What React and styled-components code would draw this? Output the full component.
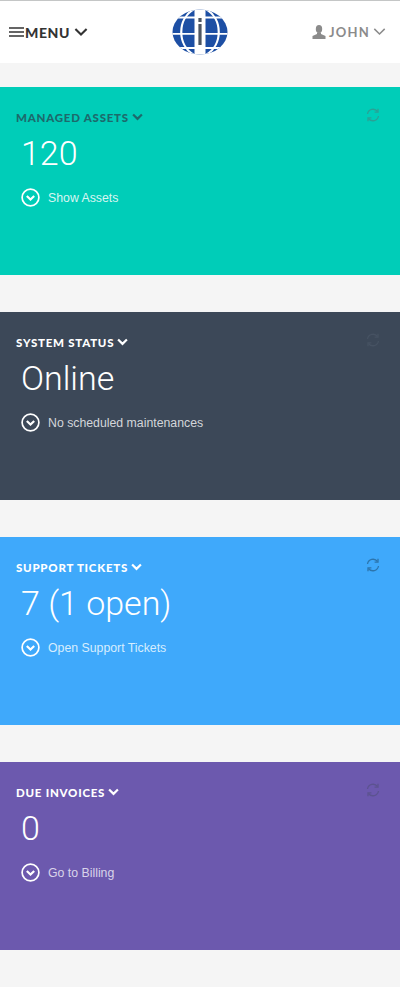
import styled, { createGlobalStyle } from "styled-components";

const GlobalStyle = createGlobalStyle`
  html, body {
    margin: 0;
    padding: 0;
    background: #f5f5f5;
  }
`;

const Page = styled.div`
  width: 400px;
  height: 987px;
  overflow: hidden;
  background: #f5f5f5;
`;

const Header = styled.header`
  height: 63px;
  box-sizing: border-box;
  border-top: 1px solid #c4c6c6;
  background: #fff;
  display: grid;
  grid-template-columns: 1fr auto 1fr;
  align-items: center;
  padding: 0 9px;
`;

const MenuButton = styled.div`
  display: flex;
  align-items: center;
  gap: 1px;
  font-family: "Lato", sans-serif;
  font-weight: 900;
  font-size: 14px;
  letter-spacing: 0.6px;
  color: #333;
`;

const UserButton = styled.div`
  display: flex;
  align-items: center;
  justify-content: flex-end;
  gap: 3px;
  padding-right: 5px;
  font-family: "Lato", sans-serif;
  font-weight: 700;
  font-size: 13px;
  letter-spacing: 1.2px;
  color: #8b8b8b;
`;

const Cards = styled.main`
  display: flex;
  flex-direction: column;
  gap: 37px;
  padding-top: 24px;
`;

const Card = styled.section`
  height: 188px;
  box-sizing: border-box;
  background: ${(p) => p.$bg};
  padding: 22px 16px 0;
  position: relative;
`;

const CardTitle = styled.div`
  display: flex;
  align-items: center;
  gap: 3px;
  height: 16px;
  font-family: "Lato", sans-serif;
  font-weight: 900;
  font-size: 11.5px;
  letter-spacing: 0.75px;
  color: ${(p) => p.$color};
`;

const Refresh = styled.svg`
  position: absolute;
  top: 21px;
  right: 20px;
  width: 14px;
  height: 14px;
  fill: none;
  stroke: ${(p) => p.$color};
  stroke-width: 1.3;
`;

const CardValue = styled.div`
  margin: 7px 0 0 5px;
  height: 42px;
  line-height: 42px;
  font-family: "Roboto", sans-serif;
  font-weight: 300;
  font-size: 34px;
  color: #fff;
`;

const CardLink = styled.div`
  display: flex;
  align-items: center;
  gap: 8px;
  margin: 14px 0 0 5px;
  font-family: "Liberation Sans", sans-serif;
  font-size: 12.3px;
  color: ${(p) => p.$color};
`;

const LinkIcon = styled.svg`
  width: 19px;
  height: 19px;
  flex: none;
`;

const Spacer = styled.span`
  width: 2px;
`;

const Chevron = ({ size = 12, width = 2, color = "currentColor" }) => (
  <svg width={size} height={size * 0.7} viewBox="0 0 12 8" fill="none">
    <path d="M1.2 1.5 6 6.2l4.8-4.7" stroke={color} strokeWidth={width} />
  </svg>
);

const Burger = () => (
  <svg width="15" height="10" viewBox="0 0 15 10">
    <path d="M0 1h15M0 5h15M0 9h15" stroke="#333" strokeWidth="1.6" />
  </svg>
);

const UserIcon = () => (
  <svg width="14" height="14" viewBox="0 0 14 14" fill="#8b8b8b">
    <ellipse cx="7" cy="4" rx="3.2" ry="4" />
    <path d="M5 7.5h4v1.6l4.5 2V14H.5v-2.9L5 9.1z" />
  </svg>
);

const Logo = () => (
  <svg width="56" height="46" viewBox="0 0 56 46">
    <defs>
      <clipPath id="globe">
        <ellipse cx="28" cy="23" rx="27.5" ry="22.5" />
      </clipPath>
    </defs>
    <g clipPath="url(#globe)">
      <rect width="56" height="46" fill="#1d4fa4" />
      <path d="M0 8.5h56M0 24.8h56M0 39h56" stroke="#fff" strokeWidth="1.8" />
      <rect x="22.5" y="0" width="11" height="46" fill="#fff" />
      <path d="M22 0C5 10 5 36 22 46M34 0c17 10 17 36 0 46" fill="none" stroke="#fff" strokeWidth="2.2" />
    </g>
    <rect x="26.4" y="9" width="3.2" height="4" fill="#4d5560" />
    <rect x="26.4" y="15" width="3.2" height="21" fill="#4d5560" />
  </svg>
);

const LinkCircle = ({ color }) => (
  <LinkIcon viewBox="0 0 19 19" fill="none">
    <circle cx="9.5" cy="9.5" r="8.4" stroke={color} strokeWidth="1.7" />
    <path d="M5.8 8 9.5 11.5 13.2 8" stroke={color} strokeWidth="2.2" />
  </LinkIcon>
);

const cards = [
  { title: "MANAGED ASSETS", value: "120", link: "Show Assets", bg: "#00cdb8", titleColor: "#1d6a6c", refresh: "#2aa195", linkColor: "#d8f6f2" },
  { title: "SYSTEM STATUS", value: "Online", link: "No scheduled maintenances", bg: "#3c4858", titleColor: "#fff", refresh: "#465262", linkColor: "#d3d6da" },
  { title: "SUPPORT TICKETS", value: "7 (1 open)", link: "Open Support Tickets", bg: "#3fa9fb", titleColor: "#fff", refresh: "#2c75ad", linkColor: "#d6edfe" },
  { title: "DUE INVOICES", value: "0", link: "Go to Billing", bg: "#6c59ae", titleColor: "#fff", refresh: "#5c5390", linkColor: "#d9d4ea" },
];

export default function App() {
  return (
    <Page>
      <GlobalStyle />
      <Header>
        <MenuButton>
          <Burger />
          MENU
          <Spacer />
          <Chevron size={14} width={1.8} color="#333" />
        </MenuButton>
        <Logo />
        <UserButton>
          <UserIcon />
          JOHN
          <Chevron size={13} width={1.4} color="#8b8b8b" />
        </UserButton>
      </Header>
      <Cards>
        {cards.map((c) => (
          <Card key={c.title} $bg={c.bg}>
            <CardTitle $color={c.titleColor}>
              {c.title}
              <Chevron size={11} width={2.4} color={c.titleColor} />
            </CardTitle>
            <Refresh $color={c.refresh} viewBox="0 0 14 14">
              <path d="M1.5 6A5.6 5.6 0 0 1 11.5 3.5M12.5 8A5.6 5.6 0 0 1 2.5 10.5" />
              <path d="M12 .8v3.4H8.6M2 13.2V9.8h3.4" />
            </Refresh>
            <CardValue>{c.value}</CardValue>
            <CardLink $color={c.linkColor}>
              <LinkCircle color="#fff" />
              {c.link}
            </CardLink>
          </Card>
        ))}
      </Cards>
    </Page>
  );
}
